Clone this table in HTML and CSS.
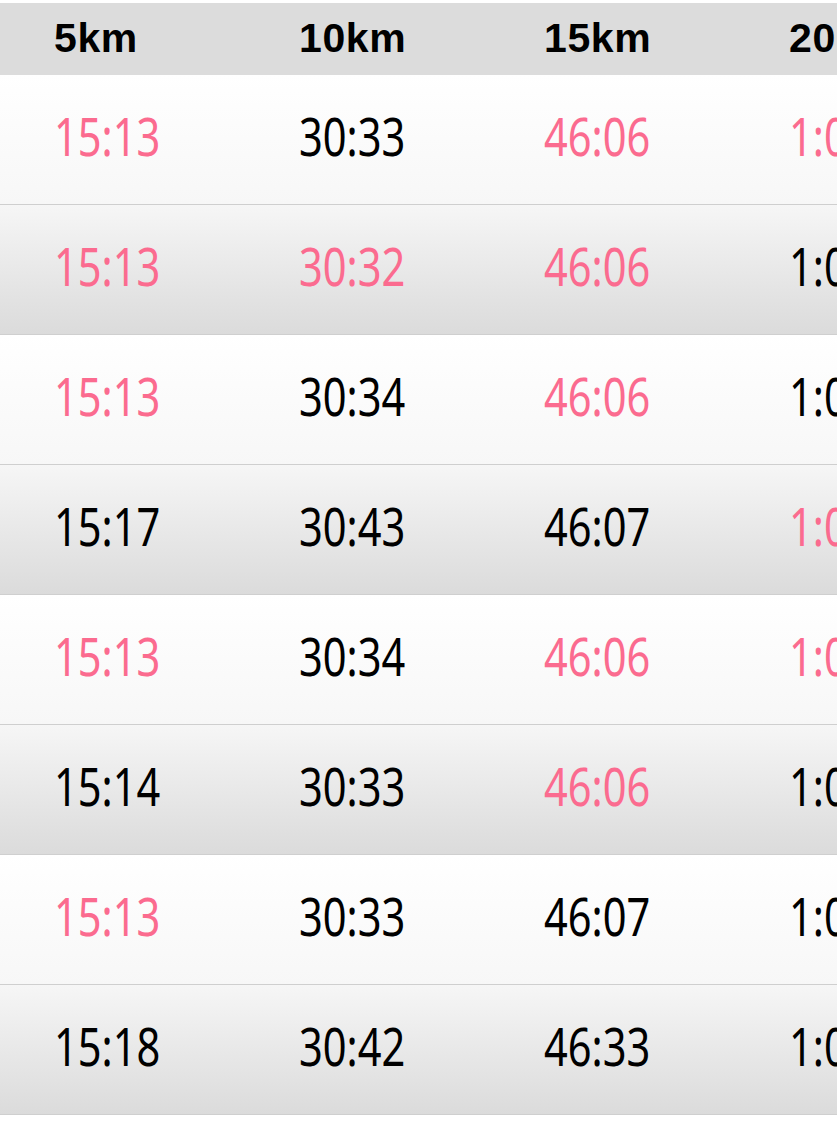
FILE: index.html
```html
<!DOCTYPE html>
<html lang="ja">
<head>
<meta charset="utf-8">
<title>Splits</title>
<link rel="stylesheet" href="styles.css">
</head>
<body>
<div class="table">
  <div class="row head">
    <div class="cell">5km</div>
    <div class="cell">10km</div>
    <div class="cell">15km</div>
    <div class="cell">20km</div>
  </div>
  <div class="row odd">
    <div class="cell"><span class="t best">15:13</span></div>
    <div class="cell"><span class="t">30:33</span></div>
    <div class="cell"><span class="t best">46:06</span></div>
    <div class="cell"><span class="t best">1:01:22</span></div>
  </div>
  <div class="row even">
    <div class="cell"><span class="t best">15:13</span></div>
    <div class="cell"><span class="t best">30:32</span></div>
    <div class="cell"><span class="t best">46:06</span></div>
    <div class="cell"><span class="t">1:01:24</span></div>
  </div>
  <div class="row odd">
    <div class="cell"><span class="t best">15:13</span></div>
    <div class="cell"><span class="t">30:34</span></div>
    <div class="cell"><span class="t best">46:06</span></div>
    <div class="cell"><span class="t">1:01:25</span></div>
  </div>
  <div class="row even">
    <div class="cell"><span class="t">15:17</span></div>
    <div class="cell"><span class="t">30:43</span></div>
    <div class="cell"><span class="t">46:07</span></div>
    <div class="cell"><span class="t best">1:01:22</span></div>
  </div>
  <div class="row odd">
    <div class="cell"><span class="t best">15:13</span></div>
    <div class="cell"><span class="t">30:34</span></div>
    <div class="cell"><span class="t best">46:06</span></div>
    <div class="cell"><span class="t best">1:01:22</span></div>
  </div>
  <div class="row even">
    <div class="cell"><span class="t">15:14</span></div>
    <div class="cell"><span class="t">30:33</span></div>
    <div class="cell"><span class="t best">46:06</span></div>
    <div class="cell"><span class="t">1:01:26</span></div>
  </div>
  <div class="row odd">
    <div class="cell"><span class="t best">15:13</span></div>
    <div class="cell"><span class="t">30:33</span></div>
    <div class="cell"><span class="t">46:07</span></div>
    <div class="cell"><span class="t">1:01:28</span></div>
  </div>
  <div class="row even">
    <div class="cell"><span class="t">15:18</span></div>
    <div class="cell"><span class="t">30:42</span></div>
    <div class="cell"><span class="t">46:33</span></div>
    <div class="cell"><span class="t">1:02:05</span></div>
  </div>
</div>
</body>
</html>
```

FILE: styles.css
```css
html, body {
  margin: 0;
  padding: 0;
  background: #ffffff;
  overflow: hidden;
}

.table {
  padding-top: 3px;
  width: 837px;
  overflow: hidden;
}

.row {
  display: grid;
  grid-template-columns: repeat(4, 245px);
  padding-left: 54px;
  align-items: center;
  white-space: nowrap;
}

.head {
  height: 72px;
  background: #dcdcdc;
  font-family: "Liberation Sans", Arial, sans-serif;
  font-weight: bold;
  font-size: 41px;
  letter-spacing: 0.6px;
  color: #000000;
}

.head .cell {
  padding-bottom: 2px;
}

.odd,
.even {
  height: 129px;
  border-bottom: 1px solid #cfcfcf;
  font-family: "Noto Sans", sans-serif;
  font-size: 52px;
  color: #000000;
}

.odd {
  background: linear-gradient(#ffffff, #f7f7f7);
}

.even {
  background: linear-gradient(#f6f6f6, #dbdbdb);
}

.odd .cell,
.even .cell {
  padding-bottom: 8px;
}

.t {
  display: inline-block;
  transform: scaleX(0.8);
  transform-origin: left center;
}

.best {
  color: #fb6b8f;
}
```
